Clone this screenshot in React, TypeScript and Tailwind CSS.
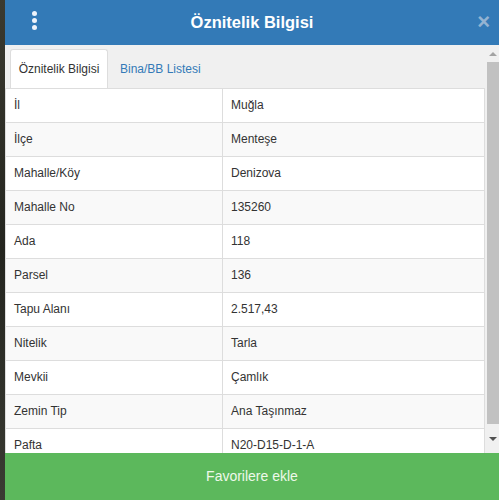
import React from "react";

const rows: [string, string][] = [
  ["İl", "Muğla"],
  ["İlçe", "Menteşe"],
  ["Mahalle/Köy", "Denizova"],
  ["Mahalle No", "135260"],
  ["Ada", "118"],
  ["Parsel", "136"],
  ["Tapu Alanı", "2.517,43"],
  ["Nitelik", "Tarla"],
  ["Mevkii", "Çamlık"],
  ["Zemin Tip", "Ana Taşınmaz"],
  ["Pafta", "N20-D15-D-1-A"],
];

export default function App() {
  return (
    <div
      className="w-[499px] h-[500px] flex bg-[#2f302a] overflow-hidden"
      style={{ fontFamily: '"Liberation Sans", Arial, sans-serif' }}
    >
      <div className="w-[5px] shrink-0 bg-gradient-to-b from-[#3b3a30] via-[#24251f] to-[#3a3b33]" />
      <div className="flex-1 flex flex-col bg-[#f0f0f0]">
        <div className="h-[45px] shrink-0 bg-[#337ab7] flex items-center relative">
          <div className="absolute left-[21px] top-[11px] flex flex-col gap-[2px] items-center w-[16px]">
            <span className="block w-[5px] h-[5px] rounded-full bg-[#eef3fa]" />
            <span className="block w-[5px] h-[5px] rounded-full bg-[#eef3fa]" />
            <span className="block w-[5px] h-[5px] rounded-full bg-[#eef3fa]" />
          </div>
          <div className="flex-1 text-center text-white font-bold text-[16.5px] leading-none">
            Öznitelik Bilgisi
          </div>
          <div className="absolute right-[9px] top-[11px] text-[#94b3d2] font-bold text-[22px] leading-none">
            ×
          </div>
        </div>
        <div className="flex-1 flex min-h-0">
          <div className="flex-1 min-w-0 overflow-hidden pt-[4px]">
            <div className="flex pl-[5px] h-[39px] text-[12px]">
              <div className="w-[98px] border border-b-0 border-[#dddddd] bg-white rounded-t-[3px] flex items-center justify-center text-[#333333]">
                Öznitelik Bilgisi
              </div>
              <div className="px-[12px] flex items-center text-[#337ab7]">Bina/BB Listesi</div>
            </div>
            <table className="w-[480px] border-collapse text-[12px] text-[#333333] bg-white">
              <tbody>
                {rows.map(([k, v], i) => (
                  <tr key={k} className={i % 2 === 1 ? "bg-[#f9f9f9]" : "bg-white"}>
                    <td className="w-[217px] border border-[#dddddd] px-[8px] py-[8px] leading-[17px]">{k}</td>
                    <td className="border border-[#dddddd] px-[8px] py-[8px] leading-[17px]">{v}</td>
                  </tr>
                ))}
              </tbody>
            </table>
          </div>
          <div className="w-[12px] shrink-0 flex flex-col bg-[#f0f0f0]">
            <div className="h-[17px] flex items-center justify-center">
              <span className="block w-0 h-0 border-l-[4px] border-r-[4px] border-b-[4px] border-l-transparent border-r-transparent border-b-[#a3a3a3]" />
            </div>
            <div className="h-[362px] bg-[#c1c1c1]" />
            <div className="flex-1 flex items-center justify-center">
              <span className="block w-0 h-0 border-l-[4px] border-r-[4px] border-t-[4px] border-l-transparent border-r-transparent border-t-[#505050]" />
            </div>
          </div>
        </div>
        <div className="h-[47px] shrink-0 bg-[#5cb85c] flex items-center justify-center text-[14px] text-[#eef8ea]">
          Favorilere ekle
        </div>
      </div>
    </div>
  );
}
